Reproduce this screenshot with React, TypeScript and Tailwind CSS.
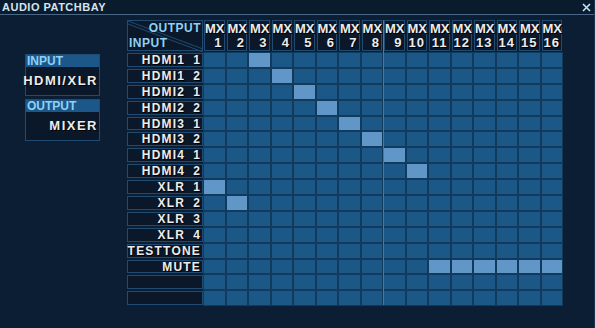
import React from "react";

const rows = [
  ["HDMI1", "1"],
  ["HDMI1", "2"],
  ["HDMI2", "1"],
  ["HDMI2", "2"],
  ["HDMI3", "1"],
  ["HDMI3", "2"],
  ["HDMI4", "1"],
  ["HDMI4", "2"],
  ["XLR", "1"],
  ["XLR", "2"],
  ["XLR", "3"],
  ["XLR", "4"],
  ["TESTTONE", ""],
  ["MUTE", ""],
  ["", ""],
  ["", ""],
];

// row index -> list of routed MX outputs (0 based)
const routes: Record<number, number[]> = {
  0: [2],
  1: [3],
  2: [4],
  3: [5],
  4: [6],
  5: [7],
  6: [8],
  7: [9],
  8: [0],
  9: [1],
  13: [10, 11, 12, 13, 14, 15],
};

const cols = Array.from({ length: 16 }, (_, i) => i + 1);

const textFx = "text-[#ececec] [text-shadow:1px_1px_0_#000]";

function InfoBox({ title, value }: { title: string; value: string }) {
  return (
    <div className="w-[75px] border border-[#1f4b72] bg-[#0a1829]">
      <div className="h-[12px] bg-[#1c578a] pl-[1px] text-[12px] leading-[12px] font-bold text-[#8fd0f5]">
        {title}
      </div>
      <div
        className={`h-[28px] flex items-center justify-end pr-[1px] text-[13px] font-bold tracking-[1.5px] ${textFx}`}
      >
        {value}
      </div>
    </div>
  );
}

const App: React.FC = () => {
  return (
    <div
      className="w-[595px] h-[328px] bg-[#0c1e33] flex flex-col border-r border-[#1c3550] overflow-hidden"
      style={{ fontFamily: '"Liberation Sans", Arial, sans-serif' }}
    >
      <div className="h-[15px] shrink-0 flex items-center justify-between pl-[2px] pr-[3px] bg-[#0b1b2e] border-b border-[#4a6886]">
        <span className="text-[11px] font-bold text-[#d4e4f0] leading-none tracking-[0.5px]">
          AUDIO PATCHBAY
        </span>
        <svg width="9" height="9" viewBox="0 0 9 9">
          <path d="M1 1 L8 8 M8 1 L1 8" stroke="#bfe6f4" strokeWidth="1.6" />
        </svg>
      </div>

      <div className="flex pt-[5px]">
        <div className="ml-[25px] mt-[34px] flex flex-col gap-[3px]">
          <InfoBox title="INPUT" value="HDMI/XLR" />
          <InfoBox title="OUTPUT" value="MIXER" />
        </div>

        <div className="relative ml-[27px]">
          <div className="grid grid-cols-[75px_repeat(16,20.5px)] grid-rows-[31px_repeat(16,13.9px)] gap-x-[2px] gap-y-[2px]">
            <div className="relative border border-[#1f4b72] bg-[#0a1829] mr-[-1px]">
              <svg className="absolute inset-0" width="75" height="31" viewBox="0 0 75 31">
                <path d="M0 0 L75 28" stroke="#1f4b72" strokeWidth="1" />
                <path d="M0 3 L75 31" stroke="#1f4b72" strokeWidth="1" />
              </svg>
              <span className="absolute right-[1px] top-[0px] text-[12px] font-bold tracking-[0.5px] text-[#8fd0f5] leading-[14px]">
                OUTPUT
              </span>
              <span className="absolute left-[1px] bottom-[0px] text-[12px] font-bold tracking-[0.5px] text-[#8fd0f5] leading-[14px]">
                INPUT
              </span>
            </div>
            {cols.map((c) => (
              <div
                key={c}
                className={`border border-[#1f4b72] bg-[#0a1829] flex flex-col items-end justify-center text-[13px] font-bold leading-[14px] ${textFx}`}
              >
                <span className="w-full text-center">MX</span>
                <span className="pr-[1px] tracking-[1px]">{c}</span>
              </div>
            ))}

            {rows.map(([name, num], r) => (
              <React.Fragment key={r}>
                <div
                  className={`border border-[#1f4b72] bg-[#0a1829] mr-[-1px] flex items-center justify-end pr-[1px] text-[12px] font-bold tracking-[1.2px] leading-none whitespace-pre ${textFx}`}
                >
                  <span>{name}</span>
                  {num && <span className="ml-[8px]">{num}</span>}
                </div>
                {cols.map((c) => {
                  const on = routes[r]?.includes(c - 1);
                  return (
                    <div
                      key={c}
                      className={`${on ? "bg-[#6196c8]" : "bg-[#1b5887]"} shadow-[0_0_0_1px_#123a5c]`}
                    />
                  );
                })}
              </React.Fragment>
            ))}
          </div>
          <div className="absolute top-0 bottom-0 left-[255.5px] w-[1px] bg-[#4c77a0]" />
        </div>
      </div>
    </div>
  );
};

export default App;
